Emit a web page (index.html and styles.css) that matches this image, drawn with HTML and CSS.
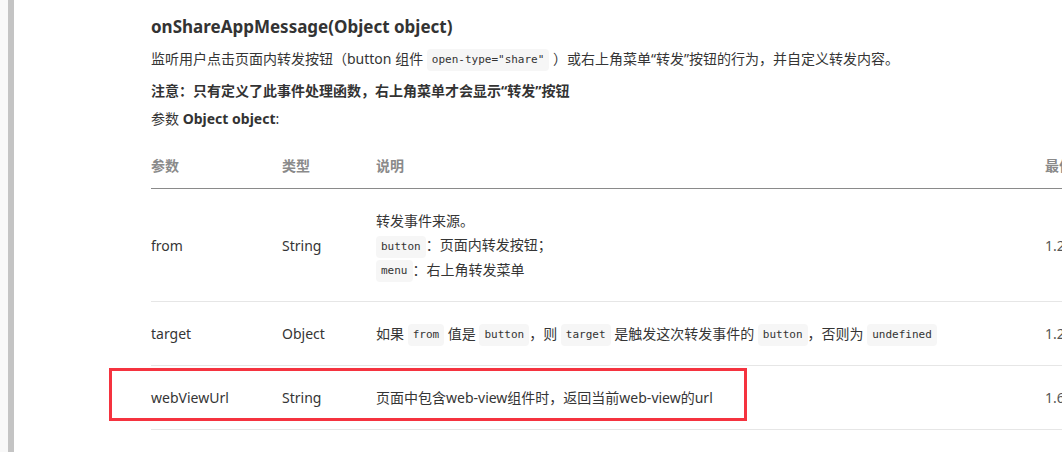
FILE: index.html
```html
<!DOCTYPE html>
<html lang="zh-CN">
<head>
    <meta charset="UTF-8">
    <meta name="viewport" content="width=device-width, initial-scale=1.0">
    <title>onShareAppMessage</title>
    <link rel="stylesheet" href="styles.css">
</head>
<body>
    <div class="page">
        <div class="gutter"></div>
        <div class="scrollbar"></div>

        <div class="content">
            <h3 class="api-title">onShareAppMessage(Object object)</h3>
            <p class="desc">监听用户点击页面内转发按钮（button 组件 <code>open-type="share"</code> ）或右上角菜单“转发”按钮的行为，并自定义转发内容。</p>
            <p class="note"><strong>注意：只有定义了此事件处理函数，右上角菜单才会显示“转发”按钮</strong></p>
            <p class="params">参数 <strong>Object object</strong>:</p>

            <table class="param-table">
                <colgroup>
                    <col class="col-name">
                    <col class="col-type">
                    <col class="col-desc">
                    <col class="col-ver">
                </colgroup>
                <thead>
                    <tr>
                        <th>参数</th>
                        <th>类型</th>
                        <th>说明</th>
                        <th>最低版本</th>
                    </tr>
                </thead>
                <tbody>
                    <tr class="multi">
                        <td>from</td>
                        <td>String</td>
                        <td>
                            <div>转发事件来源。</div>
                            <div><code>button</code>：页面内转发按钮；</div>
                            <div><code>menu</code>：右上角转发菜单</div>
                        </td>
                        <td class="ver">1.2.4</td>
                    </tr>
                    <tr>
                        <td>target</td>
                        <td>Object</td>
                        <td>如果 <code>from</code> 值是 <code>button</code>，则 <code>target</code> 是触发这次转发事件的 <code>button</code>，否则为 <code>undefined</code></td>
                        <td class="ver">1.2.4</td>
                    </tr>
                    <tr>
                        <td>webViewUrl</td>
                        <td>String</td>
                        <td>页面中包含web-view组件时，返回当前web-view的url</td>
                        <td class="ver">1.6.4</td>
                    </tr>
                </tbody>
            </table>
        </div>

        <!-- annotation box drawn over the last row -->
        <div class="highlight"></div>
    </div>
</body>
</html>
```

FILE: styles.css
```css
* {
    margin: 0;
    padding: 0;
    box-sizing: border-box;
}

html, body {
    width: 100%;
    height: 100%;
    overflow: hidden;
    background: #fff;
}

body {
    font-family: 'Noto Sans', 'Noto Sans CJK SC', sans-serif;
    font-size: 14px;
    color: #353535;
}

.page {
    position: relative;
    display: flex;
    height: 100%;
}

.gutter {
    width: 8px;
    flex-shrink: 0;
    background: #f8f8f8;
}

.scrollbar {
    width: 6px;
    flex-shrink: 0;
    background: #c4c4c4;
}

.content {
    flex-shrink: 0;
    padding: 15px 0 0 137px;
}

.api-title {
    font-size: 17px;
    line-height: 24px;
    font-weight: bold;
    color: #333;
}

.desc {
    margin-top: 8px;
    line-height: 24px;
}

.note {
    margin-top: 8px;
    line-height: 24px;
}

.note strong,
.params strong {
    font-weight: bold;
    color: #333;
}

.params {
    margin-top: 4px;
    line-height: 24px;
}

code {
    display: inline-block;
    font-family: 'DejaVu Sans Mono', monospace;
    font-size: 11px;
    line-height: 22px;
    padding: 0 5px;
    background: #f6f6f6;
    border-radius: 4px;
    color: #333;
    vertical-align: middle;
}

.param-table {
    margin-top: 11px;
    width: 1000px;
    table-layout: fixed;
    border-collapse: collapse;
}

.col-name { width: 131px; }
.col-type { width: 94px; }
.col-desc { width: 669px; }
.col-ver { width: 106px; }

.param-table th {
    text-align: left;
    font-weight: bold;
    color: #8a8a8a;
    line-height: 24px;
    padding: 12px 0 10px;
    border-bottom: 1px solid #8a8a8a;
}

.param-table td {
    line-height: 24px;
    padding: 20px 0 19px;
    border-bottom: 1px solid #e6e6e6;
    vertical-align: middle;
}

.ver {
    color: #555;
}

.highlight {
    position: absolute;
    left: 109px;
    top: 368px;
    width: 638px;
    height: 53px;
    border: 3px solid #f5333f;
}
```
